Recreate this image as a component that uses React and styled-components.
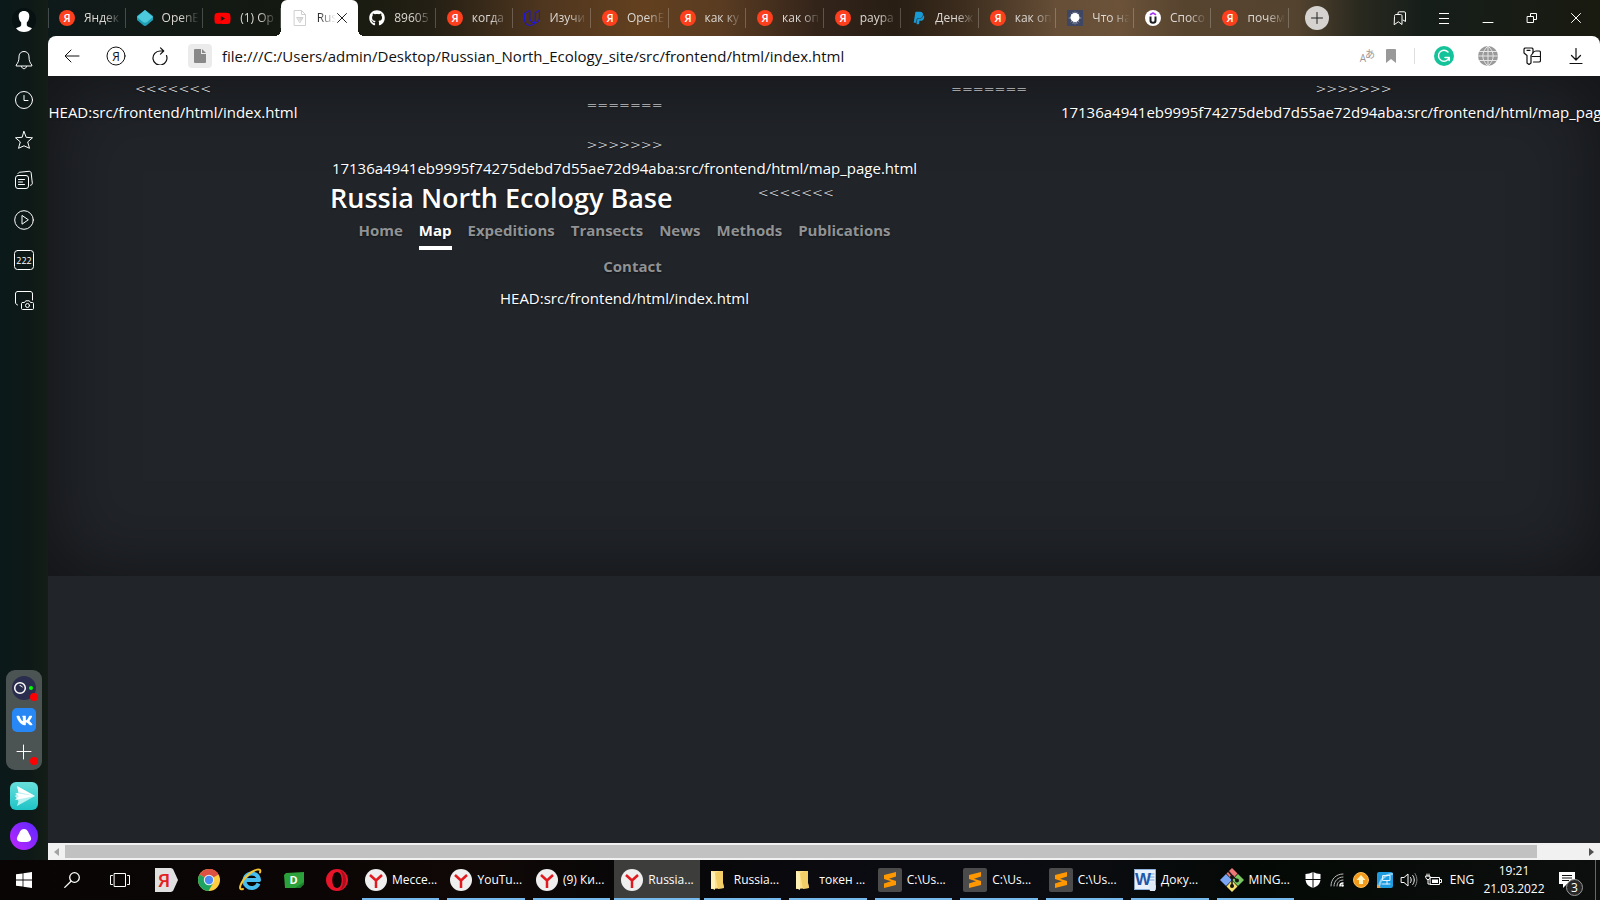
import React from "react";
import styled, { createGlobalStyle, css } from "styled-components";
import { FaGithub, FaYoutube, FaPaypal, FaVk } from "react-icons/fa";
import { SiUdacity } from "react-icons/si";

const UI = `"Open Sans", "Noto Sans", sans-serif`;

const GlobalStyle = createGlobalStyle`
  *, *::before, *::after { box-sizing: border-box; }
  body { margin: 0; background: #0e1816; font-family: ${UI}; overflow: hidden; }
  button { font: inherit; color: inherit; background: none; border: 0; padding: 0; cursor: pointer; }
  h1, p { margin: 0; font-weight: inherit; }
  svg { display: block; flex: none; }
`;

const Desktop = styled.div`
  min-height: 100vh;
  display: flex;
  flex-direction: column;
`;

const Browser = styled.div`
  flex: 1;
  display: flex;
  background: linear-gradient(90deg, #0c191b 0%, #121a17 9%, #14190f 20%, #241f14 27%, #4f361f 34%, #62401f 40%, #5a3c22 45%, #33241a 51%, #281e14 56%, #3b2c1d 60%, #664e37 66%, #6b5239 70%, #57442f 74%, #54432f 81%, #29291f 85%, #161e1a 89%, #191a10 100%);
`;

/* ---------- side panel ---------- */
const SidePanel = styled.aside`
  width: 48px;
  flex: none;
  display: flex;
  flex-direction: column;
  align-items: center;
  justify-content: space-between;
  padding-bottom: 10px;
  color: #fff;
  background: linear-gradient(90deg, #0b191a 0%, #0e1917 60%, #141d16 100%);
`;
const SideGroup = styled.div`
  display: flex;
  flex-direction: column;
  align-items: center;
  gap: ${(p) => p.$gap || 0}px;
`;
const SideButton = styled.button`
  width: 48px;
  height: 40px;
  display: grid;
  place-items: center;
`;
const Messengers = styled.div`
  width: 36px;
  padding: 6px;
  display: flex;
  flex-direction: column;
  gap: 8px;
  background: #4b5453;
  border-radius: 9px;
`;
const Messenger = styled.button`
  position: relative;
  width: 24px;
  height: 24px;
  display: grid;
  place-items: center;
  color: #fff;
  border-radius: ${(p) => p.$radius || "0"};
  background: ${(p) => p.$bg || "none"};
  ${(p) =>
    p.$dot &&
    css`
      &::after {
        content: "";
        position: absolute;
        right: -2px;
        bottom: -1px;
        width: 8px;
        height: 8px;
        border-radius: 50%;
        background: #f00;
      }
    `}
`;

/* ---------- tabs ---------- */
const Window = styled.div`
  flex: 1;
  min-width: 0;
  display: flex;
  flex-direction: column;
`;
const TabBar = styled.div`
  height: 36px;
  display: flex;
  color: #dcd8d3;
`;
const TabList = styled.div`
  flex: 1;
  min-width: 0;
  display: grid;
  grid-auto-flow: column;
  grid-auto-columns: minmax(0, 1fr);
  background: linear-gradient(#ffffff38, #ffffff38) left center / 1px 20px no-repeat;
`;
const Tab = styled.button`
  position: relative;
  min-width: 0;
  display: flex;
  align-items: center;
  gap: 9px;
  padding: 0 4px 0 11px;
  font-size: 12px;
  line-height: 16px;
  ${(p) =>
    p.$active
      ? css`
          background: #fff;
          color: #222;
          border-radius: 6px 6px 0 0;
          padding: 0 11px;
          &::before,
          &::after {
            content: "";
            position: absolute;
            bottom: 0;
            width: 6px;
            height: 6px;
          }
          &::before {
            right: 100%;
            background: radial-gradient(circle at 0 0, transparent 6px, #fff 6px);
          }
          &::after {
            left: 100%;
            background: radial-gradient(circle at 100% 0, transparent 6px, #fff 6px);
          }
        `
      : css`
          background: linear-gradient(#ffffff38, #ffffff38) right center / 1px 20px no-repeat;
        `}
`;
const TabTitle = styled.span`
  flex: 1;
  min-width: 0;
  overflow: hidden;
  white-space: nowrap;
  text-align: left;
  margin-right: ${(p) => (p.$active ? -8 : 0)}px;
  mask-image: linear-gradient(90deg, #000 calc(100% - 18px), transparent);
`;
const WindowControls = styled.div`
  width: 311px;
  flex: none;
  display: flex;
  align-items: center;
  justify-content: flex-end;
  color: #fff;
`;
const NewTab = styled.button`
  width: 24px;
  height: 24px;
  margin: 0 auto 0 16px;
  border-radius: 50%;
  background: #d5d2cf;
  display: grid;
  place-items: center;
`;
const ControlButton = styled.button`
  width: 44px;
  height: 36px;
  display: grid;
  place-items: center;
`;
const ControlGroup = styled.div`
  display: flex;
  padding-right: 2px;
`;

/* ---------- address bar ---------- */
const AddressBar = styled.div`
  height: 40px;
  display: flex;
  align-items: center;
  background: #fff;
  border-radius: 8px 8px 0 0;
  color: #111;
`;
const NavButton = styled.button`
  width: 44px;
  height: 40px;
  display: grid;
  place-items: center;
`;
const PageInfo = styled.button`
  width: 24px;
  height: 24px;
  margin: 0 10px 0 6px;
  display: grid;
  place-items: center;
  border-radius: 4px;
  background: #ebebeb;
`;
const NavButtons = styled.div`
  display: flex;
  padding-left: 2px;
`;
const Address = styled.input`
  flex: 1;
  min-width: 0;
  border: 0;
  outline: 0;
  padding: 0;
  background: none;
  color: #111;
  font: 400 15px/24px ${UI};
`;
const SmallActions = styled.div`
  display: flex;
  align-items: center;
  gap: 10px;
  padding-right: 18px;
  border-right: 1px solid #ddd;
  height: 16px;
`;
const Extensions = styled.div`
  display: flex;
  padding: 0 2px 0 7px;
`;

/* ---------- web page ---------- */
const Viewport = styled.main`
  flex: 1;
  min-height: 0;
  overflow: hidden;
  background: #212429;
  color: #fff;
  font-size: 15px;
  line-height: 24px;
`;
const Cover = styled.div`
  height: 500px;
  display: flex;
  text-align: center;
  white-space: nowrap;
  text-shadow: 0 1px 2px rgba(0, 0, 0, 0.5);
  box-shadow: inset 0 0 80px rgba(0, 0, 0, 0.5);
`;
const Column = styled.div`
  flex: none;
  width: ${(p) => p.$width}px;
  margin-right: ${(p) => p.$after || 0}px;
`;
const CoverContainer = styled.div`
  flex: none;
  width: 653px;
  padding: 16px 32px;
`;
const Marks = styled.p`
  height: 24px;
  font: 200 13px/26px "DejaVu Sans", sans-serif;
  margin-bottom: ${(p) => (p.$spaced ? 16 : 0)}px;
`;
const TitleRow = styled.div`
  display: flex;
  height: 34px;
`;
const Title = styled.h1`
  font-size: 27px;
  line-height: 36px;
  font-weight: 600;
`;
const TitleRest = styled.div`
  flex: 1;
`;
const Masthead = styled.nav`
  display: flex;
  flex-wrap: wrap;
  justify-content: center;
`;
const MastLink = styled.a`
  padding: 4px 0;
  font-weight: 700;
  text-decoration: none;
  color: ${(p) => (p.$active ? "#fff" : "#909294")};
  border-bottom: 4px solid ${(p) => (p.$active ? "#fff" : "transparent")};
  & + & {
    margin-left: 16px;
  }
`;

const ScrollBar = styled.div`
  height: 17px;
  display: flex;
  align-items: center;
  background: #f1f1f1;
`;
const ScrollArrow = styled.button`
  width: 17px;
  height: 17px;
  display: grid;
  place-items: center;
`;
const ScrollTrack = styled.div`
  flex: 1;
  height: 13px;
`;
const ScrollThumb = styled.div`
  width: 97%;
  height: 100%;
  background: #c1c1c1;
`;

/* ---------- taskbar ---------- */
const Taskbar = styled.footer`
  height: 40px;
  display: flex;
  color: #fff;
  font-size: 12px;
  line-height: 16px;
  background: linear-gradient(90deg, #080504 0%, #0b0605 20%, #100807 30%, #070707 40%, #0b0b12 55%, #0a0c10 68%, #050906 78%, #0c0f0d 100%);
`;
const SystemButtons = styled.div`
  display: flex;
`;
const SystemButton = styled.button`
  width: 48px;
  display: grid;
  place-items: center;
`;
const Pinned = styled.div`
  display: flex;
  width: 214px;
  padding-left: 1px;
`;
const PinnedButton = styled.button`
  flex: 1;
  display: grid;
  place-items: center;
`;
const Tasks = styled.div`
  flex: 1;
  min-width: 0;
  display: flex;
`;
const Task = styled.button`
  flex: 1 1 0;
  min-width: 0;
  display: flex;
  align-items: center;
  gap: 5px;
  padding: 0 4px 0 7px;
  background: ${(p) =>
    p.$active
      ? "linear-gradient(#76b9ed, #76b9ed) center bottom / 100% 2px no-repeat, #3d3e3c"
      : "linear-gradient(#76b9ed, #76b9ed) center bottom / calc(100% - 8px) 2px no-repeat"};
`;
const TaskLabel = styled.span`
  white-space: nowrap;
`;
const Tray = styled.div`
  width: 302px;
  flex: none;
  display: flex;
  align-items: center;
  padding-left: 3px;
`;
const TrayButton = styled.button`
  width: 24px;
  height: 40px;
  display: grid;
  place-items: center;
`;
const Language = styled.button`
  width: 34px;
  height: 40px;
`;
const Clock = styled.button`
  width: 70px;
  height: 40px;
  line-height: 18px;
  text-align: center;
`;
const Notifications = styled.button`
  position: relative;
  width: 46px;
  height: 40px;
  padding-right: 10px;
  display: grid;
  place-items: center;
`;
const Badge = styled.span`
  position: absolute;
  right: 12px;
  bottom: 4px;
  width: 17px;
  height: 17px;
  border-radius: 50%;
  border: 1px solid #999;
  background: #272727;
  line-height: 15px;
`;
const ShowDesktop = styled.button`
  flex: 1;
  height: 40px;
  border-left: 1px solid #666;
`;

/* ---------- icons ---------- */
const Svg = ({ s = 20, w = s, h = s, sw = 1, children }) => (
  <svg width={w} height={h} viewBox={`0 0 ${w} ${h}`} fill="none" stroke="currentColor" strokeWidth={sw} strokeLinecap="round" strokeLinejoin="round" aria-hidden="true">
    {children}
  </svg>
);
const Glyph = ({ x, y, size, fill = "#fff", weight = 700, family = UI, children }) => (
  <text x={x} y={y} fontSize={size} fontWeight={weight} fontFamily={family} fill={fill} stroke="none" textAnchor="middle">
    {children}
  </text>
);

const AvatarIcon = () => (
  <Svg s={24}>
    <circle cx="12" cy="12" r="12" fill="#071112" stroke="none" />
    <path d="M12 3c-3.600 0-5.600 2.400-5.300 5.600.2 2.600 1 4.600 2.500 6v2.600c-.4 1.500-3 2-5.200 3C6 23 9 24 12 24s6-1 8-3.800c-2.200-1-4.800-1.500-5.200-3v-2.600c1.500-1.400 2.300-3.400 2.500-6C17.600 5.400 15.600 3 12 3z" fill="#fff" stroke="none" />
  </Svg>
);
const BellIcon = () => (
  <Svg>
    <path d="M10 1.500c-3.500 0-5 2.500-5 5.500 0 4-1.200 6-2.800 8v1h15.600v-1C16.200 13 15 11 15 7c0-3-1.500-5.500-5-5.500zM7.500 16.500c.4 1.400 1.300 2.200 2.500 2.200s2.100-.8 2.500-2.200" />
  </Svg>
);
const ClockIcon = () => (
  <Svg><circle cx="10" cy="10" r="8.500" /><path d="M10 5.500v5h4" /></Svg>
);
const StarIcon = () => (
  <Svg><path d="M10 1.500l2.200 5.800 6.300.5-4.800 4.100 1.800 6.400-5.500-2.500-5.500 2.500 1.800-6.400-4.800-4.100 6.300-.5z" /></Svg>
);
const CollectionsIcon = () => (
  <Svg>
    <rect x="1.500" y="5.500" width="13" height="13" rx="2.500" />
    <path d="M4 3.500c.4-.8 1-1.200 2-1.300l9-.9c1.200-.1 2 .6 2.200 1.800l1.100 10c.1 1.200-.6 2-1.800 2.200M4.500 9.500h6M4.500 12h4M4.500 14.500h6" />
  </Svg>
);
const PlayIcon = () => (
  <Svg><circle cx="10" cy="10" r="9.300" /><path d="M8 5.800v8.400l6-4.200z" /></Svg>
);
const CounterIcon = () => (
  <Svg><rect x=".5" y=".5" width="19" height="19" rx="3" /><Glyph x="10" y="14" size="9" weight="400">222</Glyph></Svg>
);
const ScreenshotIcon = () => (
  <Svg>
    <path d="M3.500 15C2 14.500 1.500 13.500 1.500 12V4c0-1.700.8-2.500 2.500-2.500h12c1.700 0 2.500.8 2.500 2.500v6" />
    <path d="M8.500 12.500h2l1.200-1.700h3.600l1.200 1.700h2c.6 0 1 .4 1 1v5c0 .6-.4 1-1 1h-10c-.6 0-1-.4-1-1v-5c0-.6.4-1 1-1z" />
    <circle cx="13.500" cy="15.500" r="2" />
  </Svg>
);
const CameraBadge = () => (
  <Svg s={24}><circle cx="8" cy="12" r="5.300" strokeWidth="1.500" /><path d="M8 9.500a2.500 2.500 0 0 1 2.300 1.500" /><circle cx="19" cy="12" r="2" fill="#0f0" stroke="none" /></Svg>
);
const PlusIcon = ({ s = 16 }) => (
  <Svg s={s}><path d={`M${s / 2 - 0.5} 1v${s - 2}M1 ${s / 2 - 0.5}h${s - 2}`} /></Svg>
);
const PlaneIcon = () => (
  <svg width="28" height="28" viewBox="0 0 28 28" aria-hidden="true">
    <defs><linearGradient id="teal" x1="0" y1="0" x2="0" y2="1"><stop offset="0" stopColor="#68e0dc" /><stop offset="1" stopColor="#1fc3c6" /></linearGradient></defs>
    <rect width="28" height="28" rx="6" fill="url(#teal)" />
    <path d="M7 4l18 10L7 24l1.500-5L5 14l3.500-4z" fill="#b9f1f1" />
    <path d="M7 4l18 10-16.500-4z" fill="#fff" /><path d="M5 11l20 3-20 4 4-4z" fill="#fff" />
  </svg>
);
const AliceIcon = () => (
  <svg width="28" height="28" viewBox="0 0 28 28" aria-hidden="true">
    <defs><linearGradient id="violet" x1="0" y1="1" x2="1" y2="0"><stop offset="0" stopColor="#c126ff" /><stop offset="1" stopColor="#5a28ff" /></linearGradient></defs>
    <circle cx="14" cy="14" r="14" fill="url(#violet)" />
    <path d="M14 7c1.600 0 2.800.8 3.800 2.200l2.700 5.300c1.500 3.500.5 5.500-6.500 5.500s-8-2-6.500-5.500l2.700-5.300C11.200 7.800 12.400 7 14 7z" fill="#fff" />
  </svg>
);
const YandexTabIcon = () => (
  <Svg s={16}><circle cx="8" cy="8" r="8" fill="#fc3f1d" stroke="none" /><Glyph x="8" y="12" size="11" weight="600">Я</Glyph></Svg>
);
const OpenEduIcon = () => (
  <Svg s={16}><path d="M8 0l8 6v4l-6 5q-2 2-4 0l-6-5V6z" fill="#209fb8" stroke="none" /><path d="M8 0l8 7-6 5q-2 1.500-4 0L0 7z" fill="#4ccadb" stroke="none" /></Svg>
);
const FileIcon = () => (
  <Svg s={16}><path d="M2.500.5h7l4 4v11h-11zM9.500.5v4h4" stroke="#cfcfcf" /><path d="M5 7.500h6l-3 5z" stroke="#cfcfcf" /><circle cx="8" cy="9" r="1.200" stroke="#cfcfcf" /></Svg>
);
const SparkIcon = () => (
  <Svg s={16}>
    <rect width="16" height="16" fill="#3d4763" stroke="none" />
    <path d="M8 2v12M2 8h12M4 4l8 8M12 4l-8 8M6 2.500l4 11M10 2.500l-4 11" stroke="#8b96b0" /><circle cx="8" cy="7.500" r="4.500" fill="#fff" stroke="none" />
  </Svg>
);
const UdemyIcon = () => (
  <Svg s={16}><circle cx="8" cy="8" r="8" fill="#fff" stroke="none" /><path d="M5.500 4.500L8 3l2.500 1.500" stroke="#a435f0" strokeWidth="1.500" /><path d="M5.500 6.500v4c0 3 5 3 5 0v-4" stroke="#1c1d1f" strokeWidth="2" strokeLinecap="butt" /></Svg>
);
const PageIcon = () => (
  <Svg w={12} h={14}><path d="M1 0h6v5h5v8a1 1 0 0 1-1 1H1a1 1 0 0 1-1-1V1a1 1 0 0 1 1-1zM8 0l4 4H8z" fill="#888" stroke="none" /></Svg>
);
const CloseIcon = ({ s = 10 }) => <Svg s={s}><path d={`M.5 .5L${s - 0.5} ${s - 0.5}M${s - 0.5} .5L.5 ${s - 0.5}`} /></Svg>;
const BookmarksIcon = () => (
  <Svg s={14}><path d="M1.500 5c0-1 .5-1.500 1.500-1.500h4.500C8.500 3.500 9 4 9 5v8.500l-3.700-2.700-3.800 2.700zM5 3V2c0-.8.400-1.200 1.200-1.200h5c.9 0 1.300.5 1.300 1.200v8.500L10 9" /></Svg>
);
const MenuIcon = () => <Svg s={12}><path d="M1 1.500h10M1 6.500h10M1 11.500h10" strokeLinecap="butt" /></Svg>;
const MinimizeIcon = () => <Svg s={12}><path d="M1 10.500h10" /></Svg>;
const RestoreIcon = () => <Svg s={12}><path d="M1.500 4.500h6v6h-6zM4.500 4V1.500h6v6H8" /></Svg>;
const BackIcon = () => <Svg s={16}><path d="M15 8H1.500M7 2L1 8l6 6" /></Svg>;
const YandexHomeIcon = () => (
  <Svg><circle cx="10" cy="10" r="9" /><Glyph x="10" y="14.500" size="12" weight="400" fill="#111">Я</Glyph></Svg>
);
const ReloadIcon = () => <Svg s={18} sw={1.2}><path d="M15.500 8.500A7 7 0 1 1 9 4h3M9.500 .8L12.700 4 9.500 7.200" /></Svg>;
const TranslateIcon = () => (
  <Svg w={18} h={16}><Glyph x="5" y="14" size="10" weight="400" fill="#999">A</Glyph><Glyph x="12" y="10" size="10" weight="400" fill="#999" family={'"Noto Sans CJK JP", sans-serif'}>あ</Glyph></Svg>
);
const BookmarkIcon = () => <Svg w={10} h={14}><path d="M0 1a1 1 0 0 1 1-1h8a1 1 0 0 1 1 1v13l-5-4-5 4z" fill="#999" stroke="none" /></Svg>;
const GrammarlyIcon = () => (
  <Svg><circle cx="10" cy="10" r="10" fill="#15c39a" stroke="none" /><path d="M14 6A5.500 5.500 0 1 0 15.200 11.500H11M15.200 11.500v3" stroke="#fff" strokeWidth="1.500" /></Svg>
);
const GlobeIcon = () => (
  <Svg><circle cx="10" cy="10" r="10" fill="#999" stroke="none" /><path d="M10 0v20M0 10h20M1.500 5.500h17M1.500 14.500h17M10 0C3 6 3 14 10 20M10 0c7 6 7 14 0 20" stroke="#e6e6e6" /></Svg>
);
const KeyIcon = () => (
  <Svg s={18} sw={1.2}><path d="M2 1h7l1 1v4L8 8.500V16l-2 1.500L4 16V8.500L1 6V2zM4 3.300h3" /><path d="M10 5.500c1-1.300 2-1.500 3-1.500h3c1 0 1.500.5 1.500 1.500v8c0 1-.5 1.500-1.500 1.500h-5.500M9 9.500h8" /></Svg>
);
const DownloadIcon = () => <Svg s={16} sw={1.2}><path d="M8 .5v11M3.500 7.500L8 12l4.500-4.500M2 15.500h12" /></Svg>;

const WindowsIcon = () => (
  <Svg s={16}><path d="M0 2.300l6.600-.9v6.100H0zM7.400 1.300L16 0v7.500H7.400zM0 8.400h6.600v6.200L0 13.700zM7.400 8.400H16V16l-8.600-1.200z" fill="#fff" stroke="none" /></Svg>
);
const SearchIcon = () => <Svg s={16} sw={1.3}><circle cx="10.500" cy="5.500" r="4.800" /><path d="M7 9.200L.8 15.400" /></Svg>;
const TaskViewIcon = () => <Svg w={20} h={14}><path d="M4.500 .5h11v13h-11zM2.500 2.500H.5v9h2M17.500 2.500h2v9h-2" /></Svg>;
const YandexPinIcon = () => (
  <Svg s={24}><path d="M1 0h16l2 1 5 11-5 11-2 1H1z" fill="#e0e0e0" stroke="none" /><Glyph x="10" y="19" size="19" weight="500" fill="#e31e24" family="Roboto, sans-serif">Я</Glyph></Svg>
);
const ChromeIcon = () => (
  <Svg s={22}>
    <g stroke="none"><circle cx="11" cy="11" r="11" fill="#ffcd40" /><path d="M11 11L1.500 5.500A11 11 0 0 1 20.500 5.500z" fill="#dd5144" /><path d="M11 5.500h9.500a11 11 0 0 0-9.500-5.500z" fill="#dd5144" /><path d="M1.500 5.500A11 11 0 0 0 10.500 22l5-8.500L11 11z" fill="#1da462" /><circle cx="11" cy="11" r="5.200" fill="#f1f1f1" /><circle cx="11" cy="11" r="4.200" fill="#4c8bf5" /></g>
  </Svg>
);
const ExplorerIcon = () => (
  <Svg s={24}><path d="M19.500 15.500A7.300 7.300 0 1 1 20 12H7" stroke="#48bdf0" strokeWidth="4" strokeLinecap="butt" /><path d="M4 21C-2 23 2 13 9 7c6-5.500 14-8 12-2.500" stroke="#f5c431" strokeWidth="2" /></Svg>
);
const DIcon = () => (
  <Svg w={20} h={16}><path d="M2 1L20 0v12l-4 4H1L0 3z" fill="#2ba03b" stroke="none" /><path d="M20 10v2l-4 4H11z" fill="#1c7f2b" stroke="none" /><Glyph x="9.500" y="12" size="11">D</Glyph></Svg>
);
const OperaIcon = () => (
  <Svg s={22}><path fillRule="evenodd" d="M11 0a11 11 0 1 0 0 22 11 11 0 0 0 0-22zM11 3c3 0 4.700 3.600 4.700 8S14 19 11 19s-4.700-3.600-4.700-8S8 3 11 3z" fill="#e8142a" stroke="none" /><path d="M14 1.200c8 3 8 17 0 19.600 4-5 4-14.600 0-19.600z" fill="#a80f1d" stroke="none" /></Svg>
);
const YBrowserIcon = () => (
  <Svg s={22}><circle cx="11" cy="11" r="11" fill="#efefef" stroke="none" /><path d="M5 6l6 5.500L17 6M11 11v8" stroke="#e01a1f" strokeWidth="2.500" strokeLinecap="butt" /></Svg>
);
const FolderIcon = () => (
  <Svg w={22} h={20}><path d="M4 1h12v12l1 5-13 1z" fill="#ffe08a" stroke="none" /><path d="M8 3l5-2h3v12l1 5-6 1z" fill="#f3cd68" stroke="none" /><path d="M4 1l4 2v17l-4-2z" fill="#fff0b5" stroke="none" /></Svg>
);
const SublimeIcon = () => (
  <Svg s={24}><rect width="24" height="24" rx="2" fill="#4b4b4b" stroke="none" /><path d="M18 4v4.500l-7 2.300 7 2.200v4L6 20v-4.500l7-2.300L6 11V7z" fill="#ff9800" stroke="none" /></Svg>
);
const WordIcon = () => (
  <Svg s={22}><rect width="21" height="20" x=".5" y=".5" fill="#e8f0fa" stroke="#8fb4e0" /><path d="M14 5h6M14 8h6M14 11h6" stroke="#7ca4d8" /><Glyph x="9" y="16" size="17" fill="#2358a8" family={'"Liberation Sans", sans-serif'}>W</Glyph><path d="M14 15l5-2 3 4-1 5h-5z" fill="#dfeaf7" stroke="none" /></Svg>
);
const GitIcon = () => (
  <Svg s={24}>
    <g stroke="none"><path d="M12 0l5.500 5.500-5.500 6-5.500-6z" fill="#f07878" /><path d="M6 6l6 6-6 6-6-6z" fill="#7aa8f5" /><path d="M18 6l6 6-6 6-6-6z" fill="#7cc860" /><path d="M12 12.500l5.500 6-5.500 5.500-5.500-5.500z" fill="#f5e070" /></g>
    <path d="M8.500 3.500l3.500 4v10M12 8l5 4" stroke="#151515" strokeWidth="1.500" /><circle cx="12" cy="9" r="2" fill="#151515" stroke="none" /><circle cx="12" cy="18" r="2" fill="#151515" stroke="none" /><circle cx="17" cy="12.500" r="2" fill="#151515" stroke="none" />
  </Svg>
);
const ShieldIcon = () => <Svg s={16}><path d="M8 0c2.500 1.300 5 2 7.500 2v5c0 4.500-3 7.500-7.500 9C3.500 14.500.5 11.500.5 7V2C3 2 5.500 1.300 8 0z" fill="#fff" stroke="none" /><path d="M8 0v16M0 7.500h16" stroke="#0a0d0b" /></Svg>;
const WifiIcon = () => <Svg s={14}><path d="M1 13C1 6 6 1 13 1M4 13c0-5 4-9 9-9M7 13c0-3.500 2.500-6 6-6" stroke="#bbb" /><path d="M10 13c0-1.800 1.200-3 3-3" strokeWidth="1.500" /><circle cx="12.500" cy="12.500" r="1.300" fill="#fff" stroke="none" /></Svg>;
const UpdateIcon = () => <Svg s={16}><circle cx="8" cy="8" r="7.500" fill="#f49b1c" stroke="#f8bd55" /><path d="M8 3l4.500 5H10v4H6V8H3.500z" fill="#fff3c4" stroke="none" /></Svg>;
const DisplayIcon = () => <Svg s={16}><rect width="16" height="16" rx="2" fill="#1f9be0" stroke="none" /><path d="M2 15C3 7 8 3 15 2" stroke="#8cd0f4" strokeWidth="2" /><path d="M6 3.500h7v5H6zM5 12h8M10 9v3" stroke="#dff2ff" /><path d="M0 12l4 4H0z" fill="#f0a040" stroke="none" /></Svg>;
const SpeakerIcon = () => <Svg w={18} h={16}><path d="M1.500 5.500h2.500l4-3.500v12l-4-3.500H1.500zM10.500 5.500c1 1.500 1 3.500 0 5M12.800 3.500c2 2.800 2 6.200 0 9" /><path d="M15 1.500c2.600 4 2.600 9 0 13" stroke="#888" /></Svg>;
const BatteryIcon = () => <Svg w={17} h={14}><path d="M5.500 4.500h9v7h-9zM15 6.500h1.500v3H15" /><path d="M7 6.500h6v3.500H7z" fill="#fff" stroke="none" /><path d="M1 3h4v2L4 6.500H2L1 5zM2 3V1M4 3V1M3 6.500V11h2" fill="#0a0d0b" /></Svg>;
const NoteIcon = () => <Svg s={16}><path d="M0 0h16v12H8l-4 4v-4H0z" fill="#fff" stroke="none" /><path d="M3 3.500h10M3 6h10M3 8.500h7" stroke="#111" strokeLinecap="butt" /></Svg>;

/* ---------- data ---------- */
const SIDE = [
  ["Профиль", AvatarIcon], ["Уведомления", BellIcon], ["История", ClockIcon], ["Избранное", StarIcon],
  ["Коллекции", CollectionsIcon], ["Видео", PlayIcon], ["Вкладки", CounterIcon], ["Скриншот", ScreenshotIcon],
];
const Ya = <YandexTabIcon />;
const TABS = [
  [Ya, "Яндек"],
  [<OpenEduIcon />, "OpenE"],
  [<FaYoutube size={17} color="#f00" />, "(1) Op"],
  [<FileIcon />, "Rus", true],
  [<FaGithub size={16} color="#fff" />, "89605"],
  [Ya, "когда"],
  [<SiUdacity size={16} color="#2015d8" />, "Изучи"],
  [Ya, "OpenE"],
  [Ya, "как ку"],
  [Ya, "как оп"],
  [Ya, "paypa"],
  [<FaPaypal size={14} color="#179bd7" />, "Денеж"],
  [Ya, "как оп"],
  [<SparkIcon />, "Что на"],
  [<UdemyIcon />, "Спосо"],
  [Ya, "почем"],
];
const LINKS = ["Home", "Map", "Expeditions", "Transects", "News", "Methods", "Publications", "Contact"];
const PINNED = [["Яндекс", YandexPinIcon], ["Chrome", ChromeIcon], ["Internet Explorer", ExplorerIcon], ["D", DIcon], ["Opera", OperaIcon]];
const TASKS = [
  [YBrowserIcon, "Мессе..."], [YBrowserIcon, "YouTu..."], [YBrowserIcon, "(9) Ки..."], [YBrowserIcon, "Russia...", true],
  [FolderIcon, "Russia..."], [FolderIcon, "токен ..."], [SublimeIcon, "C:\\Us..."], [SublimeIcon, "C:\\Us..."],
  [SublimeIcon, "C:\\Us..."], [WordIcon, "Доку..."], [GitIcon, "MING..."],
];
const TRAY = [["Защита", ShieldIcon], ["Сеть", WifiIcon], ["Обновление", UpdateIcon], ["Графика", DisplayIcon], ["Громкость", SpeakerIcon], ["Питание", BatteryIcon]];
const HEAD_PATH = "HEAD:src/frontend/html/index.html";
const COMMIT_PATH = "17136a4941eb9995f74275debd7d55ae72d94aba:src/frontend/html/map_page.html";

export default function App() {
  return (
    <Desktop>
      <GlobalStyle />
      <Browser>
        <SidePanel>
          <SideGroup>
            {SIDE.map(([label, Icon]) => (
              <SideButton key={label} aria-label={label}><Icon /></SideButton>
            ))}
          </SideGroup>
          <SideGroup $gap={12}>
            <Messengers>
              <Messenger aria-label="Телемост" $bg="#2b2d4e" $radius="50%" $dot><CameraBadge /></Messenger>
              <Messenger aria-label="ВКонтакте" $bg="#2787f5" $radius="5px"><FaVk size={17} /></Messenger>
              <Messenger aria-label="Добавить" $dot><PlusIcon /></Messenger>
            </Messengers>
            <button aria-label="Мессенджер"><PlaneIcon /></button>
            <button aria-label="Алиса"><AliceIcon /></button>
          </SideGroup>
        </SidePanel>

        <Window>
          <TabBar>
            <TabList>
              {TABS.map(([icon, title, active], i) => (
                <Tab key={i} $active={active}>
                  {icon}
                  <TabTitle $active={active}>{title}</TabTitle>
                  {active && <CloseIcon />}
                </Tab>
              ))}
            </TabList>
            <WindowControls>
              <NewTab aria-label="Новая вкладка"><Svg s={12}><path d="M6 .5v11M.5 6h11" stroke="#222" /></Svg></NewTab>
              <ControlGroup>
                <ControlButton aria-label="Закладки"><BookmarksIcon /></ControlButton>
                <ControlButton aria-label="Меню"><MenuIcon /></ControlButton>
                <ControlButton aria-label="Свернуть"><MinimizeIcon /></ControlButton>
                <ControlButton aria-label="Восстановить"><RestoreIcon /></ControlButton>
                <ControlButton aria-label="Закрыть"><CloseIcon /></ControlButton>
              </ControlGroup>
            </WindowControls>
          </TabBar>

          <AddressBar>
            <NavButtons>
              <NavButton aria-label="Назад"><BackIcon /></NavButton>
              <NavButton aria-label="Яндекс"><YandexHomeIcon /></NavButton>
              <NavButton aria-label="Обновить"><ReloadIcon /></NavButton>
            </NavButtons>
            <PageInfo aria-label="О странице"><PageIcon /></PageInfo>
            <Address aria-label="Адрес" defaultValue="file:///C:/Users/admin/Desktop/Russian_North_Ecology_site/src/frontend/html/index.html" />
            <SmallActions>
              <button aria-label="Перевести"><TranslateIcon /></button>
              <button aria-label="В закладки"><BookmarkIcon /></button>
            </SmallActions>
            <Extensions>
              <NavButton aria-label="Grammarly"><GrammarlyIcon /></NavButton>
              <NavButton aria-label="VPN"><GlobeIcon /></NavButton>
              <NavButton aria-label="Пароли"><KeyIcon /></NavButton>
              <NavButton aria-label="Загрузки"><DownloadIcon /></NavButton>
            </Extensions>
          </AddressBar>

          <Viewport>
            <Cover>
              <Column $width={250}>
                <Marks>{"<<<<<<<"}</Marks>
                <p>{HEAD_PATH}</p>
              </Column>
              <CoverContainer>
                <Marks $spaced>=======</Marks>
                <Marks>{">>>>>>>"}</Marks>
                <p>{COMMIT_PATH}</p>
                <TitleRow>
                  <Title>Russia North Ecology Base</Title>
                  <TitleRest><Marks>{"<<<<<<<"}</Marks></TitleRest>
                </TitleRow>
                <Masthead>
                  {LINKS.map((l) => (
                    <MastLink key={l} href="#" $active={l === "Map"}>{l}</MastLink>
                  ))}
                </Masthead>
                <p>{HEAD_PATH}</p>
              </CoverContainer>
              <Column $width={76} $after={32}><Marks>=======</Marks></Column>
              <Column $width={589}>
                <Marks>{">>>>>>>"}</Marks>
                <p>{COMMIT_PATH}</p>
              </Column>
            </Cover>
          </Viewport>

          <ScrollBar>
            <ScrollArrow aria-label="Влево"><Svg w={5} h={8}><path d="M5 0v8L0 4z" fill="#a3a3a3" stroke="none" /></Svg></ScrollArrow>
            <ScrollTrack><ScrollThumb /></ScrollTrack>
            <ScrollArrow aria-label="Вправо"><Svg w={5} h={8}><path d="M0 0v8l5-4z" fill="#505050" stroke="none" /></Svg></ScrollArrow>
          </ScrollBar>
        </Window>
      </Browser>

      <Taskbar>
        <SystemButtons>
          <SystemButton aria-label="Пуск"><WindowsIcon /></SystemButton>
          <SystemButton aria-label="Поиск"><SearchIcon /></SystemButton>
          <SystemButton aria-label="Представление задач"><TaskViewIcon /></SystemButton>
        </SystemButtons>
        <Pinned>
          {PINNED.map(([label, Icon]) => (
            <PinnedButton key={label} aria-label={label}><Icon /></PinnedButton>
          ))}
        </Pinned>
        <Tasks>
          {TASKS.map(([Icon, label, active], i) => (
            <Task key={i} $active={active}><Icon /><TaskLabel>{label}</TaskLabel></Task>
          ))}
        </Tasks>
        <Tray>
          {TRAY.map(([label, Icon]) => (
            <TrayButton key={label} aria-label={label}><Icon /></TrayButton>
          ))}
          <Language>ENG</Language>
          <Clock>19:21<br />21.03.2022</Clock>
          <Notifications aria-label="Уведомления"><NoteIcon /><Badge>3</Badge></Notifications>
          <ShowDesktop aria-label="Показать рабочий стол" />
        </Tray>
      </Taskbar>
    </Desktop>
  );
}
